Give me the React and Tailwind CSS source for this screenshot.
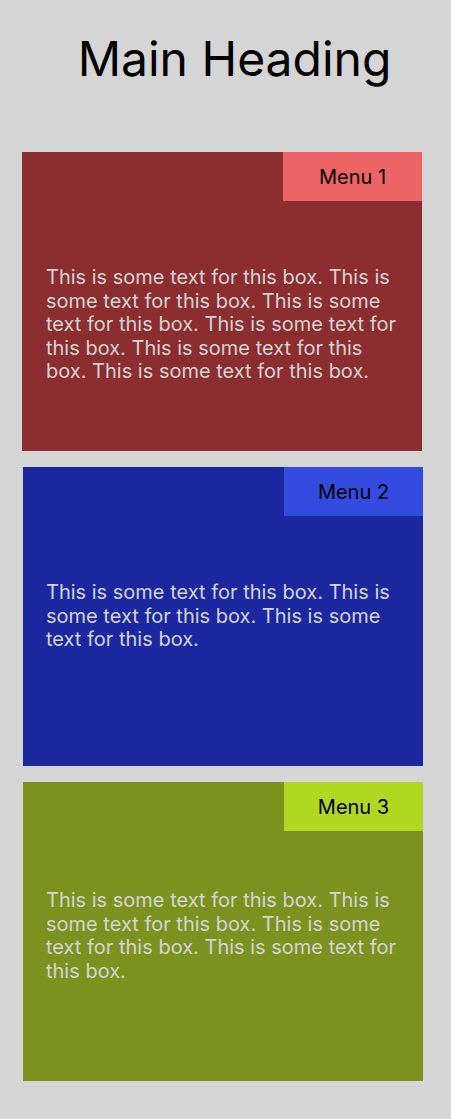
const boxes = [
  {
    id: 1,
    bg: 'bg-[#8c2d2f]',
    tab: 'bg-[#ee6464]',
    shift: '',
    pad: 'pt-[65px]',
    text: 'This is some text for this box. This is some text for this box. This is some text for this box. This is some text for this box. This is some text for this box. This is some text for this box.',
  },
  {
    id: 2,
    bg: 'bg-[#1b28a0]',
    tab: 'bg-[#334be0]',
    shift: 'ml-px',
    pad: 'pt-[65px]',
    text: 'This is some text for this box. This is some text for this box. This is some text for this box.',
  },
  {
    id: 3,
    bg: 'bg-[#7c921f]',
    tab: 'bg-[#b0d820]',
    shift: 'ml-px',
    pad: 'pt-[58px]',
    text: 'This is some text for this box. This is some text for this box. This is some text for this box. This is some text for this box.',
  },
]

function Box({ box }) {
  return (
    <div className={`w-[400px] h-[299px] ${box.bg} ${box.shift} flex flex-col`}>
      <div className="flex justify-end">
        <div className={`w-[139px] h-[49px] ${box.tab} flex items-center justify-center text-[20px] text-black`}>
          Menu {box.id}
        </div>
      </div>
      <p className={`${box.pad} ${box.shift ? 'pl-[23px]' : 'pl-[24px]'} pr-[20px] text-[20px] leading-[23.6px] text-[#d4d4d4]`}>
        {box.text}
      </p>
    </div>
  )
}

export default function App() {
  return (
    <div
      className="min-h-[1119px] bg-[#d5d5d5] pb-[38px]"
      style={{ fontFamily: 'Inter, "Noto Sans", sans-serif' }}
    >
      <h1 className="pl-[18px] pt-[30px] h-[152px] text-center text-[48px] leading-[58px] text-black">
        Main Heading
      </h1>
      <div className="pl-[22px] flex flex-col gap-[16px]">
        {boxes.map((box) => (
          <Box key={box.id} box={box} />
        ))}
      </div>
    </div>
  )
}
